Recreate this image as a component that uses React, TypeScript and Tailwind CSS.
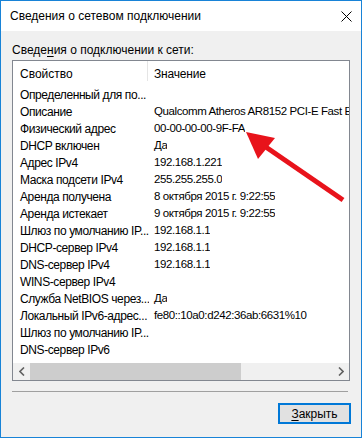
import React from 'react';

const rows: [string, string][] = [
  ['Определенный для по...', ''],
  ['Описание', 'Qualcomm Atheros AR8152 PCI-E Fast Ethernet Controller'],
  ['Физический адрес', '00-00-00-00-9F-FA'],
  ['DHCP включен', 'Да'],
  ['Адрес IPv4', '192.168.1.221'],
  ['Маска подсети IPv4', '255.255.255.0'],
  ['Аренда получена', '8 октября 2015 г. 9:22:55'],
  ['Аренда истекает', '9 октября 2015 г. 9:22:55'],
  ['Шлюз по умолчанию IP...', '192.168.1.1'],
  ['DHCP-сервер IPv4', '192.168.1.1'],
  ['DNS-сервер IPv4', '192.168.1.1'],
  ['WINS-сервер IPv4', ''],
  ['Служба NetBIOS через...', 'Да'],
  ['Локальный IPv6-адрес...', 'fe80::10a0:d242:36ab:6631%10'],
  ['Шлюз по умолчанию IP...', ''],
  ['DNS-сервер IPv6', ''],
];

function RedArrow() {
  // tip at (243,131), tail towards bottom right
  return (
    <svg className="pointer-events-none absolute left-0 top-0" width="362" height="438" viewBox="0 0 362 438">
      <line x1="259" y1="142" x2="342" y2="199" stroke="#e8131b" strokeWidth="5" />
      <polygon points="245,131 274,137 257,158" fill="#e8131b" />
    </svg>
  );
}

export default function App() {
  return (
    <div
      className="relative flex h-[438px] w-[362px] flex-col border border-[#1883d7] bg-[#f0f0f0] text-[12px] text-black"
      style={{ fontFamily: '"Liberation Sans", Arial, sans-serif' }}
    >
      <div className="flex h-[30px] items-center justify-between bg-white pl-[9px] pr-[9px]">
        <span className="text-[12px]">Сведения о сетевом подключении</span>
        <svg width="11" height="11" viewBox="0 0 11 11">
          <path d="M0.5 0.5 L10.5 10.5 M10.5 0.5 L0.5 10.5" stroke="#000" strokeWidth="1" />
        </svg>
      </div>

      <div className="flex flex-1 flex-col px-[11px]">
        <div className="mt-[11px] h-[17px] leading-[17px]">
          Сведе<span className="underline underline-offset-2">н</span>ия о подключении к сети:
        </div>

        <div className="mt-[1px] flex h-[321px] flex-col border border-[#828790] bg-white">
          <div className="flex h-[25px] items-center">
            <div className="w-[134px] pl-[7px]">Свойство</div>
            <div className="h-[20px] w-px self-start bg-[#e5e5e5]" />
            <div className="pl-[6px] tracking-[-0.2px]">Значение</div>
          </div>
          {rows.map(([k, v], i) => (
            <div key={i} className="flex h-[17px] items-center whitespace-nowrap">
              <div className="w-[136px] shrink-0 overflow-hidden pl-[7px] tracking-[-0.4px]">{k}</div>
              <div className="overflow-hidden pl-[5px] text-[11.5px] tracking-[-0.4px]">{v}</div>
            </div>
          ))}
          <div className="mt-auto flex h-[17px] items-stretch bg-[#f0f0f0]">
            <div className="flex w-[17px] items-center justify-center">
              <svg width="6" height="9" viewBox="0 0 6 9">
                <path d="M5 0.5 L1 4.5 L5 8.5" stroke="#606060" strokeWidth="1.6" fill="none" />
              </svg>
            </div>
            <div className="w-[211px] bg-[#cdcdcd]" />
            <div className="flex-1" />
            <div className="flex w-[17px] items-center justify-center">
              <svg width="6" height="9" viewBox="0 0 6 9">
                <path d="M1 0.5 L5 4.5 L1 8.5" stroke="#606060" strokeWidth="1.6" fill="none" />
              </svg>
            </div>
          </div>
        </div>

        <div className="mr-[2px] mt-[10px] h-px bg-[#a0a0a0]" />

        <div className="mt-[11px] flex justify-end">
          <button className="mr-[-1px] h-[21px] w-[73px] border-2 border-[#0078d7] bg-[#e1e1e1] text-[12px] leading-none">
            <span className="underline underline-offset-2">З</span>акрыть
          </button>
        </div>
      </div>

      <RedArrow />
    </div>
  );
}
